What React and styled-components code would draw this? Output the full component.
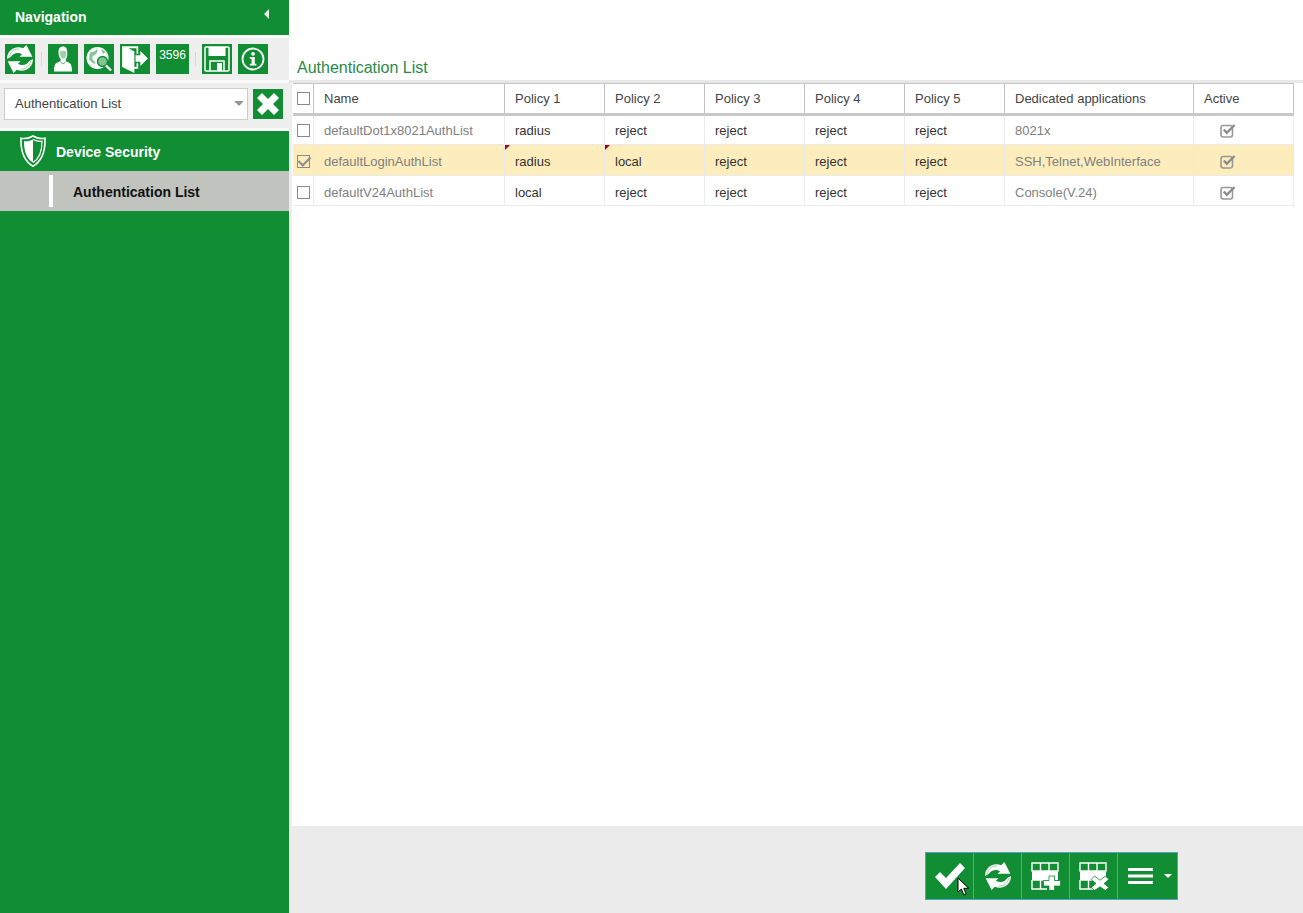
import React from "react";
import styled, { createGlobalStyle } from "styled-components";

const GlobalStyle = createGlobalStyle`
  html, body { margin: 0; padding: 0; height: 100%; background: #fff; }
  body { font-family: "Liberation Sans", Arial, sans-serif; overflow: hidden; }
  #root { height: 100%; }
`;

const GREEN = "#118e33";

const arrowPath = "M2 14 C1.5 8 6.5 3 12.5 3 C14 3 15.5 3.3 17 4 L20 1 L25.5 12 L13.5 12 L16 9.6 C12.5 7.6 8 8 5.5 12 Z";

const RefreshGlyph = () => (
  <svg width="30" height="30" viewBox="0 0 28 28">
    <path d={arrowPath} fill="#fff" />
    <path d="M4 12 C5 7 9 4.5 13 4.6" stroke="#118e33" strokeWidth=".7" fill="none" opacity=".55" />
    <g transform="rotate(180 14 14)">
      <path d={arrowPath} fill="#fff" />
      <path d="M4 12 C5 7 9 4.5 13 4.6" stroke="#118e33" strokeWidth=".7" fill="none" opacity=".55" />
    </g>
  </svg>
);

const PersonGlyph = () => (
  <svg width="24" height="28" viewBox="0 0 24 28">
    <path d="M12 1.5 C8.5 1.5 7.5 4 7.5 7.5 C7.5 11 8.6 13 9.6 14 L9.6 16 L5.5 18 C3.6 19 3 22 3 26.5 L21 26.5 C21 22 20.4 19 18.5 18 L14.8 16 L15 14 C16 12.5 16.5 10.5 16.3 7.5 C16 4 15.5 1.5 12 1.5 Z" fill="#fff" />
    <path d="M8.6 7 C10 5.5 13 5.2 15.4 6.4 C15.6 9.5 15 12 13.6 13.6 C11.5 14.5 9 12 8.6 7 Z" fill="#118e33" opacity=".4" />
    <path d="M9.5 16.5 C10.5 19 13.5 19 14.8 16.5" stroke="#118e33" strokeWidth=".8" fill="none" />
  </svg>
);

const GlobeSearchGlyph = () => (
  <svg width="28" height="28" viewBox="0 0 28 28" fill="none">
    <circle cx="12.5" cy="13" r="11" fill="#fff" />
    <path d="M5 7 C8 8 10 6 12 4 C14 7 10 10 8 11 C6 13 9 16 11 18 C9 20 6 17 4 14 Z" fill="#118e33" opacity=".5" />
    <path d="M16 4 L21 7 L18 9 Z" fill="#118e33" opacity=".5" />
    <circle cx="17.5" cy="16.5" r="5" fill="#7fc493" stroke="#118e33" strokeWidth="1.4" />
    <path d="M21 20.5 L26 25.5" stroke="#fff" strokeWidth="2.4" />
  </svg>
);

const ExitGlyph = () => (
  <svg width="30" height="30" viewBox="0 0 28 28">
    <path d="M2 2 L17 2 L17 9 L15.4 9 L15.4 4 L8 4 L13.4 7 L13.4 21.5 L15.4 21.5 L15.4 18 L17 18 L17 23 L13.4 23 L13.4 27 L2 21.5 Z" fill="#fff" />
    <path d="M14.5 10.5 L19 10.5 L19 6.5 L26 13.5 L19 20.5 L19 16.5 L14.5 16.5 Z" fill="#fff" />
  </svg>
);

const FloppyGlyph = () => (
  <svg width="26" height="26" viewBox="0 0 26 26" fill="none">
    <rect x="1" y="1" width="24" height="24" rx="1" stroke="#fff" strokeWidth="1.5" />
    <rect x="4.5" y="1" width="17" height="9" fill="#fff" />
    <path d="M6 25 L6 15 L20 15 L20 25" stroke="#fff" strokeWidth="1.5" />
    <rect x="13" y="17" width="5" height="8" fill="#fff" />
  </svg>
);

const InfoGlyph = () => (
  <svg width="24" height="24" viewBox="0 0 24 24" fill="none">
    <circle cx="12" cy="12" r="10.5" stroke="#fff" strokeWidth="1.8" />
    <circle cx="12" cy="6.8" r="1.9" fill="#fff" />
    <path d="M8.8 10 L13.8 10 L13.8 16.8 L15.4 16.8 L15.4 18.6 L8.8 18.6 L8.8 16.8 L10.6 16.8 L10.6 11.8 L8.8 11.8 Z" fill="#fff" />
  </svg>
);

const CrossGlyph = () => (
  <svg width="22" height="22" viewBox="0 0 22 22">
    <path d="M5 0 L11 6 L17 0 L22 5 L16 11 L22 17 L17 22 L11 16 L5 22 L0 17 L6 11 L0 5 Z" fill="#fff" />
  </svg>
);

const ShieldGlyph = () => (
  <svg width="26" height="32" viewBox="0 0 26 32" fill="none">
    <path d="M13 1 C9 3.5 5 4 1 3.2 C0.6 14 2.5 25 13 31.2 C23.5 25 25.4 14 25 3.2 C21 4 17 3.5 13 1 Z" stroke="#fff" strokeWidth="1.6" />
    <path d="M13 4.5 C10 6 7 6.6 4 6.2 C4 14 5.5 23 13 27.5 Z" fill="#fff" />
    <path d="M13 4.5 C16 6 19 6.6 22 6.2 C22 14 20.5 23 13 27.5" stroke="#fff" strokeWidth="1.2" />
  </svg>
);

const CheckGlyph = () => (
  <svg width="32" height="28" viewBox="0 0 32 28">
    <path d="M1 15 L6 10 L12 16 L26 1 L31 6 L12 27 Z" fill="#fff" />
  </svg>
);

const TableGlyph = ({ kind }) => (
  <svg width="30" height="28" viewBox="0 0 30 28" fill="none">
    <path d="M1 1 H27 V9 H1 Z M9.5 1 V9 M18 1 V9" stroke="#fff" strokeWidth="1.4" />
    <rect x="1" y="9" width="26" height="9" fill="#fff" />
    <path d="M1 18 V27 H16 M1 18 H16 M9.5 18 V27" stroke="#fff" strokeWidth="1.4" />
    {kind === "add" ? (
      <path d="M18 14 H23.5 V18.5 H29.5 V24 H23.5 V28.5 H18 V24 H12.5 V18.5 H18 Z" fill="#fff" stroke="#118e33" strokeWidth=".8" />
    ) : (
      <path d="M15.5 14 L21 18.2 L26.5 14 L29.8 17.5 L25 21.5 L29.8 25.5 L26.5 28.5 L21 24.8 L15.5 28.5 L12.2 25.5 L17 21.5 L12.2 17.5 Z" fill="#fff" stroke="#118e33" strokeWidth=".8" />
    )}
  </svg>
);

const MenuGlyph = () => (
  <svg width="26" height="18" viewBox="0 0 26 18">
    <path d="M0 1 H25 V4 H0 Z M0 7.5 H25 V10.5 H0 Z M0 14 H25 V17 H0 Z" fill="#fff" />
  </svg>
);

const BoxTick = () => (
  <svg width="16" height="15" viewBox="0 0 16 15" fill="none">
    <rect x="1" y="2.5" width="11.5" height="11.5" rx="2.2" stroke="#999" strokeWidth="1.6" />
    <path d="M3.8 6.5 L6.8 9.8 L14.6 2" stroke="#8c8c8c" strokeWidth="2.4" />
  </svg>
);

const MousePointer = () => (
  <svg width="13" height="19" viewBox="0 0 13 19">
    <path d="M1 1 L1 15 L4.4 12 L6.8 18 L9.2 17 L6.8 11.4 L11.6 11.2 Z" fill="#fff" stroke="#000" strokeWidth="1" />
  </svg>
);

const columns = ["Policy 1", "Policy 2", "Policy 3", "Policy 4", "Policy 5"];

const rows = [
  { name: "defaultDot1x8021AuthList", policies: ["radius", "reject", "reject", "reject", "reject"], apps: "8021x" },
  { name: "defaultLoginAuthList", policies: ["radius", "local", "reject", "reject", "reject"], apps: "SSH,Telnet,WebInterface", selected: true, dirty: [0, 1] },
  { name: "defaultV24AuthList", policies: ["local", "reject", "reject", "reject", "reject"], apps: "Console(V.24)" },
];

export default function App() {
  return (
    <Page>
      <GlobalStyle />
      <Sidebar>
        <NavHeader>
          <span>Navigation</span>
          <CollapseArrow />
        </NavHeader>
        <Toolbar>
          <ToolButton><RefreshGlyph /></ToolButton>
          <ToolDivider />
          <ToolButton><PersonGlyph /></ToolButton>
          <ToolButton><GlobeSearchGlyph /></ToolButton>
          <ToolButton><ExitGlyph /></ToolButton>
          <CounterButton>3596</CounterButton>
          <ToolDivider />
          <ToolButton><FloppyGlyph /></ToolButton>
          <ToolButton><InfoGlyph /></ToolButton>
        </Toolbar>
        <SearchRow>
          <SearchSelect>
            <span>Authentication List</span>
            <SelectCaret />
          </SearchSelect>
          <ClearButton><CrossGlyph /></ClearButton>
        </SearchRow>
        <GroupItem>
          <ShieldSlot><ShieldGlyph /></ShieldSlot>
          <span>Device Security</span>
        </GroupItem>
        <SubItem>
          <SubMarker />
          <span>Authentication List</span>
        </SubItem>
      </Sidebar>
      <Main>
        <Title>Authentication List</Title>
        <TableWrap>
          <Table>
            <colgroup>
              <col style={{ width: 20 }} />
              <col style={{ width: 191 }} />
              <col style={{ width: 100 }} />
              <col style={{ width: 100 }} />
              <col style={{ width: 100 }} />
              <col style={{ width: 100 }} />
              <col style={{ width: 100 }} />
              <col style={{ width: 189 }} />
              <col style={{ width: 100 }} />
            </colgroup>
            <thead>
              <tr>
                <HeadCell $center><CheckBox /></HeadCell>
                <HeadCell>Name</HeadCell>
                {columns.map((c) => <HeadCell key={c}>{c}</HeadCell>)}
                <HeadCell>Dedicated applications</HeadCell>
                <HeadCell>Active</HeadCell>
              </tr>
            </thead>
            <tbody>
              {rows.map((row, r) => (
                <Row key={row.name} $selected={row.selected}>
                  <Cell $center $low={r > 0}><CheckBox $checked={row.selected} /></Cell>
                  <Cell $muted $low={r > 0}>{row.name}</Cell>
                  {row.policies.map((p, i) => (
                    <Cell key={i} $low={r > 0} $dirty={row.dirty && row.dirty.includes(i)}>{p}</Cell>
                  ))}
                  <Cell $muted $low={r > 0}>{row.apps}</Cell>
                  <Cell $center $low={r > 0}><TickSlot><BoxTick /></TickSlot></Cell>
                </Row>
              ))}
            </tbody>
          </Table>
        </TableWrap>
        <Footer>
          <ActionGroup>
            <ActionButton>
              <CheckGlyph />
              <PointerSpot><MousePointer /></PointerSpot>
            </ActionButton>
            <ActionButton><RefreshGlyph /></ActionButton>
            <ActionButton><TableGlyph kind="add" /></ActionButton>
            <ActionButton><TableGlyph kind="remove" /></ActionButton>
            <MenuButton>
              <MenuGlyph />
              <MenuCaret />
            </MenuButton>
          </ActionGroup>
        </Footer>
      </Main>
    </Page>
  );
}

const Page = styled.div`
  display: flex;
  width: 1303px;
  height: 913px;
  overflow: hidden;
`;

const Sidebar = styled.aside`
  width: 289px;
  flex: none;
  height: 100%;
  background: ${GREEN};
  display: flex;
  flex-direction: column;
`;

const NavHeader = styled.div`
  height: 35px;
  display: flex;
  align-items: center;
  justify-content: space-between;
  padding: 0 20px 2px 15px;
  box-sizing: border-box;
  color: #fff;
  font-size: 14px;
  font-weight: 700;
`;

const CollapseArrow = styled.i`
  width: 0;
  height: 0;
  margin-top: -5px;
  border-top: 5px solid transparent;
  border-bottom: 5px solid transparent;
  border-right: 5px solid #e8f3ea;
`;

const Toolbar = styled.div`
  height: 45px;
  flex: none;
  box-sizing: border-box;
  border-top: 3px solid #fafafa;
  background: #eee;
  display: flex;
  align-items: center;
  padding: 0 0 0 5px;
  gap: 6px;
`;

const ToolButton = styled.div`
  width: 30px;
  height: 30px;
  background: ${GREEN};
  display: flex;
  align-items: center;
  justify-content: center;
  svg { flex: none; }
`;

const CounterButton = styled.div`
  width: 33px;
  height: 30px;
  background: ${GREEN};
  color: #fff;
  font-size: 12px;
  text-align: center;
  line-height: 23px;
`;

const ToolDivider = styled.div`
  width: 1px;
  height: 14px;
  background: #d9d9d9;
`;

const SearchRow = styled.div`
  height: 51px;
  flex: none;
  box-sizing: border-box;
  border-top: 3px solid #fafafa;
  border-bottom: 3px solid #fafafa;
  background: #eee;
  display: flex;
  align-items: center;
  padding: 0 5px 3px 4px;
  gap: 5px;
`;

const SearchSelect = styled.div`
  width: 244px;
  height: 32px;
  box-sizing: border-box;
  background: #fff;
  border: 1px solid #ccc;
  display: flex;
  align-items: center;
  justify-content: space-between;
  padding: 0 3px 2px 10px;
  font-size: 13px;
  color: #444;
`;

const SelectCaret = styled.i`
  width: 0;
  height: 0;
  border-left: 5px solid transparent;
  border-right: 5px solid transparent;
  border-top: 5px solid #999;
`;

const ClearButton = styled.div`
  width: 30px;
  height: 30px;
  background: ${GREEN};
  display: flex;
  align-items: center;
  justify-content: center;
`;

const GroupItem = styled.div`
  height: 40px;
  flex: none;
  display: flex;
  align-items: center;
  color: #fff;
  font-size: 14px;
  font-weight: 700;
  span { padding-top: 2px; }
`;

const ShieldSlot = styled.div`
  width: 26px;
  margin: 0 10px 0 20px;
  height: 32px;
  display: flex;
`;

const SubItem = styled.div`
  height: 40px;
  flex: none;
  background: #c0c3be;
  display: flex;
  align-items: center;
  color: #111;
  font-size: 14px;
  font-weight: 700;
  span { padding-top: 2px; }
`;

const SubMarker = styled.i`
  width: 4px;
  height: 32px;
  margin: 0 20px 0 49px;
  background: #fff;
`;

const Main = styled.main`
  flex: 1;
  min-width: 0;
  height: 100%;
  display: flex;
  flex-direction: column;
`;

const Title = styled.h1`
  margin: 58px 0 0 8px;
  height: 22px;
  font-size: 16px;
  line-height: 20px;
  font-weight: 400;
  color: #2a8a48;
`;

const TableWrap = styled.div`
  flex: 1;
  padding-left: 4px;
  box-shadow: inset 3px 0 0 #eee;
  border-top: 3px solid #e8e8e8;
  box-sizing: border-box;
`;

const Table = styled.table`
  border-collapse: collapse;
  table-layout: fixed;
  width: 1000px;
  font-size: 13px;
`;

const HeadCell = styled.th`
  height: 31px;
  padding: ${(p) => (p.$center ? "0" : "0 10px 0 10.5px")};
  box-sizing: border-box;
  text-align: ${(p) => (p.$center ? "center" : "left")};
  font-weight: 400;
  color: #444;
  border: 1px solid #c4c4c4;
  border-bottom: 3px solid #c8c8c8;
  &:first-child { border-left: 0; }
`;

const Row = styled.tr`
  height: ${(p) => (p.$selected ? 31 : 30)}px;
  background: ${(p) => (p.$selected ? "#fdedbc" : "#fff")};
`;

const Cell = styled.td`
  position: relative;
  padding: ${(p) => (p.$center ? "0" : "0 10px 0 10.5px")};
  padding-top: ${(p) => (p.$low ? 3 : 0)}px;
  box-sizing: border-box;
  text-align: ${(p) => (p.$center ? "center" : "left")};
  color: ${(p) => (p.$muted ? "#808080" : "#333")};
  border: 1px solid #eaeaea;
  &:first-child { border-left: 0; }
  ${(p) =>
    p.$dirty &&
    `&::before {
      content: "";
      position: absolute;
      left: 0;
      top: 0;
      border-top: 5px solid #a5001c;
      border-right: 5px solid transparent;
    }`}
`;

const CheckBox = styled.span`
  display: block;
  position: relative;
  width: 13px;
  height: 13px;
  margin-left: 4px;
  box-sizing: border-box;
  border: 1px solid #8a8a8a;
  background: ${(p) => (p.$checked ? "transparent" : "#fff")};
  ${(p) =>
    p.$checked &&
    `&::after {
      content: "";
      position: absolute;
      left: 3px;
      top: -2px;
      width: 5px;
      height: 10px;
      border-right: 2px solid #8c8c8c;
      border-bottom: 2px solid #8c8c8c;
      transform: rotate(45deg);
    }`}
`;

const TickSlot = styled.span`
  display: inline-flex;
  margin-left: -31px;
  margin-top: 3px;
`;

const Footer = styled.footer`
  height: 87px;
  flex: none;
  background: #ebebeb;
  padding: 26px 0 0 636px;
  box-sizing: border-box;
`;

const ActionGroup = styled.div`
  display: inline-flex;
  height: 48px;
  box-sizing: border-box;
  border: 1px solid #5a9fc0;
  background: ${GREEN};
`;

const ActionButton = styled.div`
  position: relative;
  width: 47px;
  display: flex;
  align-items: center;
  justify-content: center;
  border-right: 1px solid #5a9fc0;
  svg { flex: none; }
`;

const MenuButton = styled.div`
  width: 59px;
  display: flex;
  align-items: center;
  padding-left: 10px;
  box-sizing: border-box;
  gap: 10px;
`;

const MenuCaret = styled.i`
  width: 0;
  height: 0;
  border-left: 4px solid transparent;
  border-right: 4px solid transparent;
  border-top: 4px solid #fff;
`;

const PointerSpot = styled.span`
  position: absolute;
  left: 31px;
  top: 24px;
  display: flex;
`;
